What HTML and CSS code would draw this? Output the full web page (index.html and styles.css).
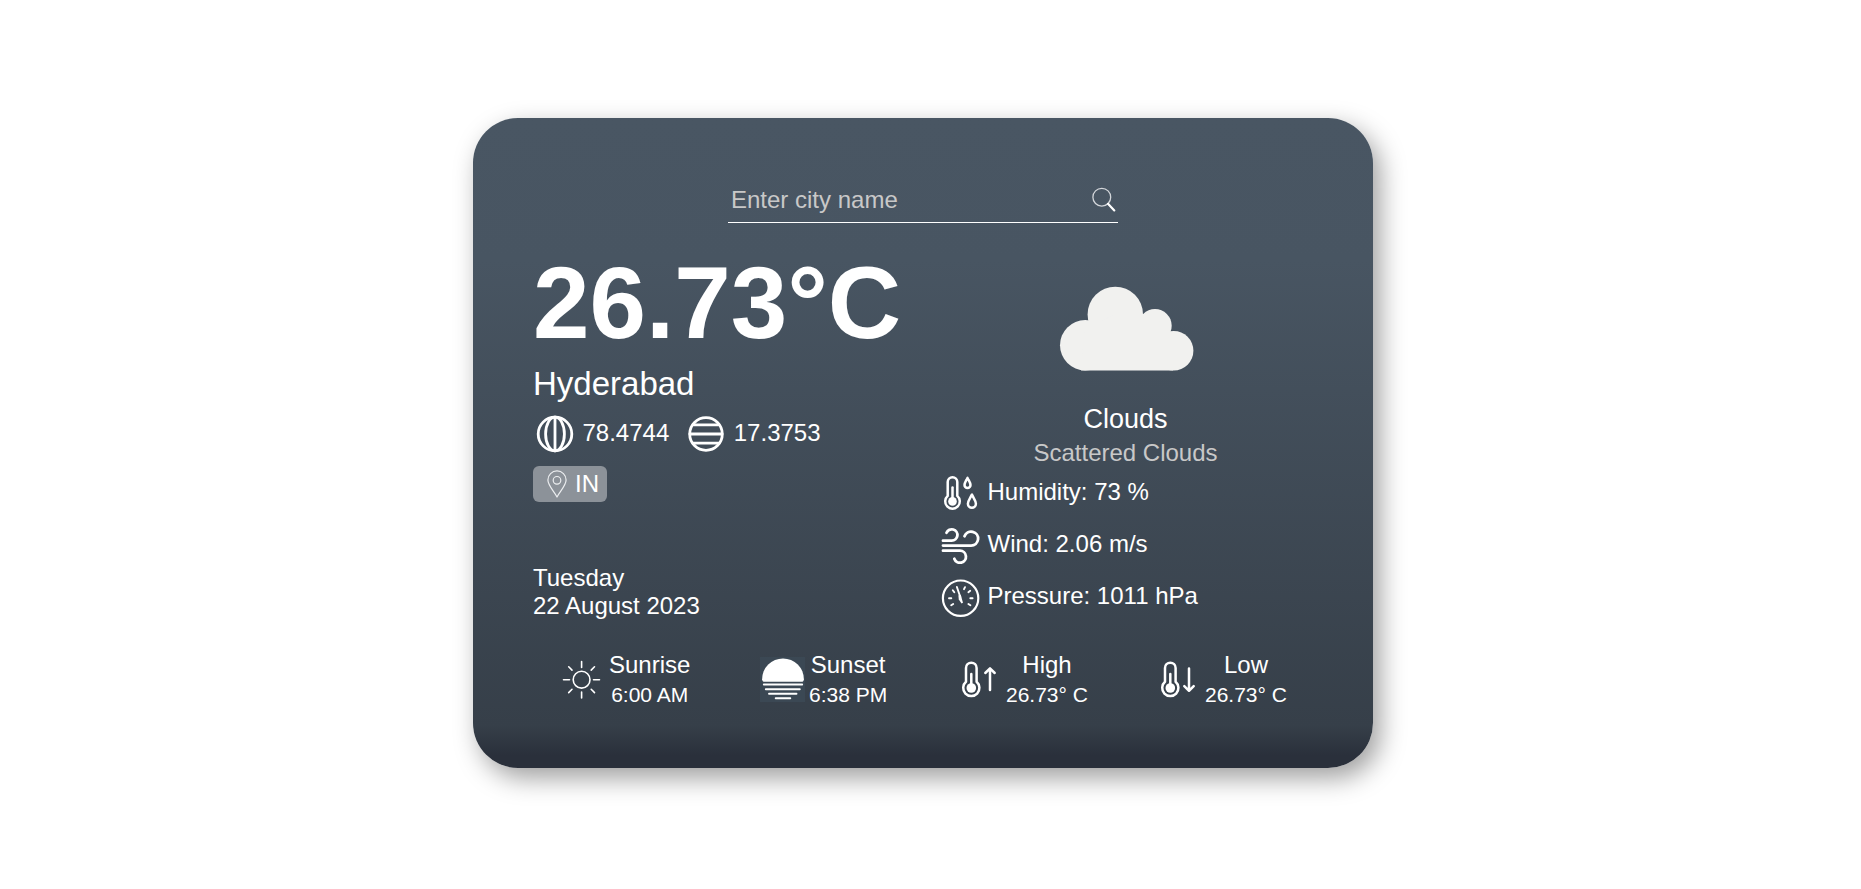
FILE: index.html
```html
<!DOCTYPE html>
<html lang="en">
<head>
<meta charset="utf-8">
<title>Weather</title>
<link rel="stylesheet" href="styles.css">
</head>
<body>
<main class="card">
  <form class="search">
    <input class="search-input" type="text" placeholder="Enter city name">
    <svg class="search-icon" viewBox="0 0 24 26"><circle class="lens" cx="9.800" cy="10.200" r="8.900" stroke-width="1.300"/><path d="M16 16.800L22.300 23.400" stroke-width="2.200"/></svg>
  </form>
  <div class="main">
    <section class="place">
      <h1 class="temp">26.73°C</h1>
      <div class="city">Hyderabad</div>
      <div class="coords">
        <svg class="globe" viewBox="0 0 40 40"><g stroke-width="2.800"><circle cx="20" cy="20" r="16.800"/><ellipse cx="20" cy="20" rx="9.400" ry="16.800"/><path d="M20 3.200V36.800"/></g></svg>
        <span class="lon">78.4744</span>
        <svg class="globe" viewBox="0 0 40 40"><g stroke-width="2.800"><circle cx="20" cy="20" r="16.300"/><path d="M7.500 10.800H32.500M4 20H36M7.500 29.200H32.500"/></g></svg>
        <span>17.3753</span>
      </div>
      <div class="badge">
        <svg class="pin" viewBox="0 0 20 28"><path d="M10 27C7.200 21.500 .900 15.400 .900 10A9.100 9.100 0 0 1 19.100 10C19.100 15.400 12.800 21.500 10 27Z"/><circle cx="10" cy="10.300" r="3.800"/></svg>
        <span>IN</span>
      </div>
      <div class="date">Tuesday<br>22 August 2023</div>
    </section>
    <section class="weather">
      <svg class="cloud" viewBox="19 16 136 86"><circle cx="45.200" cy="75.200" r="25.200"/><circle cx="75.300" cy="44.400" r="27.700"/><circle cx="115" cy="55.700" r="16.700"/><circle cx="133.700" cy="80.700" r="19.700"/><path d="M45 52H60L75 44H115L133 75V100.400H41Z"/></svg>
      <div class="condition">Clouds</div>
      <div class="detail">Scattered Clouds</div>
      <ul class="stats">
        <li><svg class="stat-icon" viewBox="0 0 40 40"><g stroke-width="2.500"><path d="M7.700 22.900V9A4.800 4.800 0 0 1 17.300 9V22.900A7.300 7.300 0 1 1 7.700 22.900Z"/><path d="M12.500 14.500V28"/><path d="M27.500 4.900C26.300 7.500 24.500 9.700 24.500 12A3 3 0 0 0 30.500 12C30.500 9.700 28.700 7.500 27.500 4.900ZM31.900 21.600C30.400 25 27.900 27.800 27.900 30.800A4 4 0 0 0 35.900 30.800C35.900 27.800 33.400 25 31.900 21.600Z"/></g><circle class="solid" cx="12.500" cy="28.400" r="4.300"/></svg><span>Humidity: 73 %</span></li>
        <li><svg class="stat-icon" viewBox="0 0 40 40"><path stroke-width="2.800" d="M3 14.700H11.700A5.700 5.700 0 1 0 6.500 6.700M3 19.600H31A7 7 0 1 0 24.500 10.300M3 24.700H20A6 6 0 1 1 14.300 32.700"/></svg><span>Wind: 2.06 m/s</span></li>
        <li><svg class="stat-icon" viewBox="0 0 40 40"><circle cx="20.600" cy="20.200" r="17.700" stroke-width="2.200"/><path stroke-width="1.900" d="M12.800 12.200L14.300 14.200M30.200 12.800L28.400 14.200M25 9.200L24 11.200M9 20.300H11.300M30.300 20.300H32.600M11.200 27.300L13.200 26M30.400 27.300L28.400 26M16.900 9L20.300 19"/><path class="solid" d="M18.400 17.500L20.700 16.700L23 24.800L21.500 25.400L18.800 21.500Z"/></svg><span>Pressure: 1011 hPa</span></li>
      </ul>
    </section>
  </div>
  <footer class="summary">
    <div class="item item-sunrise">
      <svg class="sum-icon" viewBox="0 0 45 45"><g stroke-width="1.600"><circle cx="22.600" cy="22.700" r="8.400"/><path d="M22.600 4.500V10.500M22.600 35V41M4.500 22.700H10.500M34.500 22.700H40.500M9.700 9.800L13 13.100M32.200 32.300L35.500 35.600M35.500 9.800L32.200 13.100M13 32.300L9.700 35.600"/></g></svg>
      <div class="reading"><div class="label">Sunrise</div><div class="value">6:00 AM</div></div>
    </div>
    <div class="item item-sunset">
      <svg class="sum-icon boxed" viewBox="0 0 45 45"><path class="solid" d="M3.500 24.700H42.500Q43.700 24.500 43.900 22.300A20.900 20.900 0 0 0 2.100 22.300Q2.300 24.500 3.500 24.700Z"/><path stroke-width="1.900" d="M3.800 27.500H42.200M5.800 32.200H39.800M9 36.700H36.500M15.700 41.300H30.300"/></svg>
      <div class="reading"><div class="label">Sunset</div><div class="value">6:38 PM</div></div>
    </div>
    <div class="item item-high">
      <svg class="sum-icon" viewBox="0 0 45 45"><g stroke-width="2.500"><path d="M9 24.800V11A5.300 5.300 0 0 1 19.600 11V24.800A8.100 8.100 0 1 1 9 24.800Z"/><path d="M14.300 17V31M33 33V12M28.300 16L33 11.400L37.700 16"/></g><circle class="solid" cx="14.300" cy="31" r="4.800"/></svg>
      <div class="reading"><div class="label">High</div><div class="value">26.73° C</div></div>
    </div>
    <div class="item">
      <svg class="sum-icon" viewBox="0 0 45 45"><g stroke-width="2.500"><path d="M9 24.800V11A5.300 5.300 0 0 1 19.600 11V24.800A8.100 8.100 0 1 1 9 24.800Z"/><path d="M14.300 17V31M33 11.500V33M28.300 29.200L33 33.800L37.700 29.200"/></g><circle class="solid" cx="14.300" cy="31" r="4.800"/></svg>
      <div class="reading"><div class="label">Low</div><div class="value">26.73° C</div></div>
    </div>
  </footer>
</main>
</body>
</html>
```

FILE: styles.css
```css
* { box-sizing: border-box; margin: 0; padding: 0; }

body {
  min-height: 889px;
  padding: 118px 0 0 473px;
  background: #fff;
  font-family: "Liberation Sans", Arial, sans-serif;
  font-size: 24px;
  line-height: 28px;
  color: #fff;
  overflow: hidden;
}

svg { fill: none; stroke: #fff; stroke-linecap: round; stroke-linejoin: round; flex: none; display: block; }
.solid { fill: #fff; stroke: none; }

.card {
  width: 900px;
  height: 650px;
  padding: 60px 60px 0;
  border-radius: 45px;
  background: linear-gradient(180deg, #495663 0%, #485562 22%, #363f49 93.5%, #2a303b 98%);
  box-shadow: 7px 10px 26px rgba(0, 0, 0, 0.38);
}

.search {
  display: flex;
  align-items: flex-start;
  width: 390px;
  height: 45px;
  margin: 0 auto;
  border-bottom: 1px solid #fff;
}
.search-input {
  flex: 1;
  min-width: 0;
  height: 44px;
  padding: 0 3px;
  border: 0;
  outline: 0;
  background: none;
  color: #fff;
  font: 24px "Liberation Sans", Arial, sans-serif;
}
.search-input::placeholder { color: #c8c8c8; opacity: 1; }
.search-icon { width: 24px; height: 26px; margin: 9px 1.6px 0 0; }
.lens { stroke: #d3d6da; }

.main { display: grid; grid-template-columns: 406px 374px; height: 415px; }

.place { padding-top: 22px; }
.temp { font-size: 101.6px; line-height: 116px; font-weight: 700; }
.city { font-size: 33px; line-height: 38px; margin-top: 4px; }
.coords { display: flex; align-items: center; height: 40px; margin-top: 9px; }
.coords span { padding-top: 2px; }
.globe { width: 40px; height: 40px; margin: 4px 7.5px 0 2px; }
.lon { margin-right: 15px; }
.badge {
  display: flex;
  align-items: center;
  width: 74px;
  height: 36px;
  margin-top: 14px;
  padding-left: 13.5px;
  gap: 8.5px;
  border-radius: 6px;
  background: #8c9299;
}
.pin { width: 20px; height: 28px; stroke: #eceef0; stroke-width: 1.2; }
.date { margin-top: 62px; }

.weather { display: flex; flex-direction: column; align-items: center; padding-top: 63px; }
.cloud { width: 136px; height: 86px; fill: #f1f1ef; stroke: none; margin-left: 2px; }
.condition { margin-top: 32px; font-size: 27px; line-height: 31px; margin-right: 1px; }
.detail { margin-top: 4px; color: #c8c8c8; margin-right: 1px; }
.stats { align-self: stretch; list-style: none; }
.stats li { display: flex; align-items: center; height: 52.4px; padding-left: 1px; }
.stats span { padding-bottom: 3px; }
.stat-icon { width: 40px; height: 40px; margin-right: 7.5px; }

.summary { display: flex; padding: 12px 0 0 26px; }
.item { display: flex; flex: none; align-items: flex-start; text-align: center; }
.item-sunrise { width: 201px; }
.item-sunset { width: 197px; }
.item-high { width: 199px; }
.sum-icon { width: 45px; height: 45px; margin: 7px 4px 0 0; }
.item-sunrise .sum-icon { margin-right: 5px; }
.boxed { background: #3b4854; }
.value { font-size: 21px; line-height: 30px; }
.label { line-height: 30px; }
```
